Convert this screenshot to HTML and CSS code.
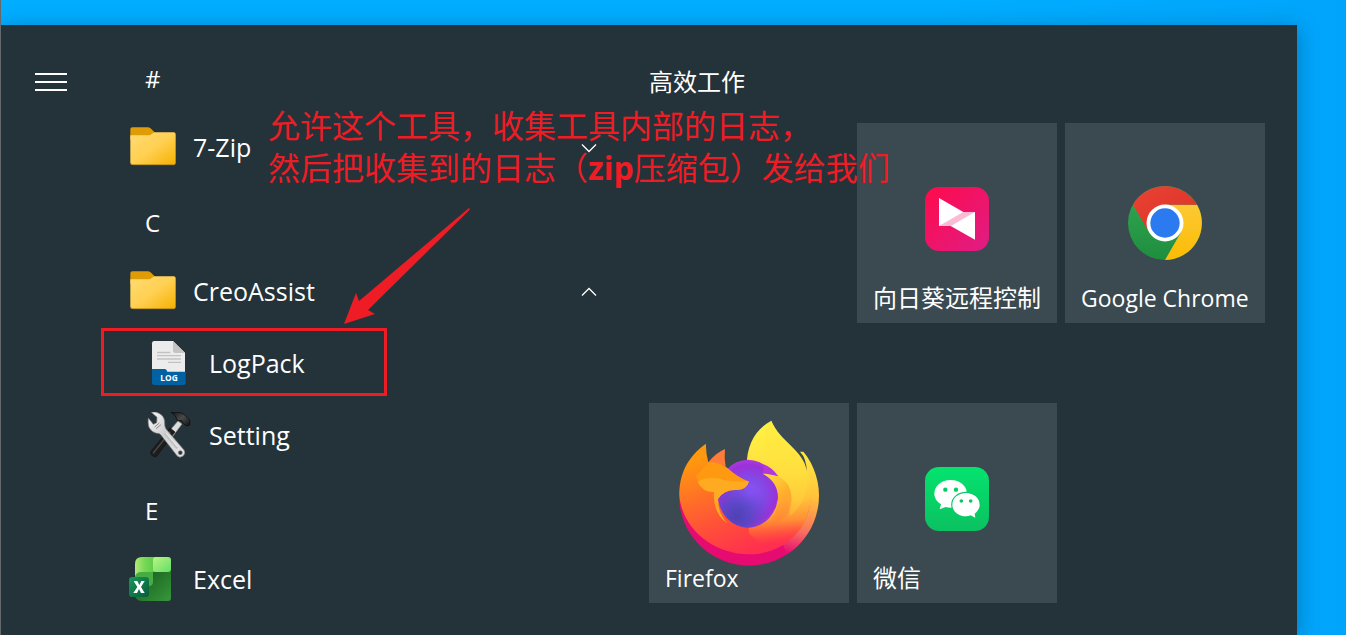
FILE: index.html
```html
<!DOCTYPE html>
<html lang="zh-CN">
<head>
<meta charset="utf-8">
<title>Start</title>
<link rel="stylesheet" href="styles.css">
</head>
<body>
<svg class="defs" aria-hidden="true">
  <defs>
    <linearGradient id="folderFace" x1="0" y1="0" x2="1" y2="1"><stop offset="0" stop-color="#ffdc73"/><stop offset=".5" stop-color="#ffd052"/><stop offset="1" stop-color="#f5b100"/></linearGradient>
    <symbol id="folder" viewBox="27 204 144 144">
      <path d="M31 240V220q0-6 6-6h47q6 0 10 5l12 12v20H31z" fill="#df9c07"/>
      <path d="M31 238H86q5 0 9-4l4-3q3-2 7-2h55q6 0 6 6v85q0 6-6 6H37q-6 0-6-6z" fill="url(#folderFace)"/>
      <path d="M33 322q2 4 6 4h121q4 0 6-4" fill="none" stroke="#c99218" stroke-width="2"/>
    </symbol>
  </defs>
</svg>
<div class="desktop">
  <main class="menu">
    <nav class="rail">
      <button class="hamburger" aria-label="展开"><span></span><span></span><span></span></button>
    </nav>

    <section class="apps">
      <button class="row letter">#</button>
      <button class="row">
        <svg class="icon"><use href="#folder"/></svg>
        <span class="name">7-Zip</span>
        <svg class="chevron" viewBox="0 0 16 16"><path d="M1 4.500l7 7 7-7"/></svg>
      </button>
      <button class="row letter">C</button>
      <button class="row">
        <svg class="icon"><use href="#folder"/></svg>
        <span class="name">CreoAssist</span>
        <svg class="chevron" viewBox="0 0 16 16"><path d="M1 11.500l7-7 7 7"/></svg>
      </button>
      <button class="row sub marked">
        <svg class="icon" viewBox="75 420 144 144">
          <path d="M96 510V430q0-7 7-7h56l36 35v60H96z" fill="#ececec"/>
          <path d="M159 423l36 36h-30q-6 0-6-6z" fill="#c4c4c4"/>
          <path d="M111 457.500h40M111 467h72M111 477h72M144 487h39" stroke="#c2c2c2" stroke-width="4"/>
          <path d="M96 507h39q5 0 7 8h55v33q0 7-7 7H103q-7 0-7-7z" fill="#0062a3"/>
          <text x="147" y="543" text-anchor="middle" class="log-text">LOG</text>
        </svg>
        <span class="name">LogPack</span>
      </button>
      <button class="row sub">
        <svg class="icon" viewBox="75 66 144 144">
          <defs>
            <linearGradient id="steel" x1="0" y1="0" x2="1" y2="1"><stop offset="0" stop-color="#fafafa"/><stop offset=".45" stop-color="#cfcfcf"/><stop offset="1" stop-color="#e8e8e8"/></linearGradient>
            <linearGradient id="hammer" x1="0" y1="0" x2="1" y2="1"><stop offset="0" stop-color="#111"/><stop offset=".5" stop-color="#4a4a4a"/><stop offset="1" stop-color="#111"/></linearGradient>
          </defs>
          <path d="M174 93l12 9-36 48-15-12z" fill="#ddd" stroke="#888" stroke-width="2"/>
          <path d="M150 114l15 12-55 73q-5 4-12-1t-6-13z" fill="#1d1d1d" stroke="#111" stroke-width="2"/>
          <path d="M150 126l-50 63" stroke="#484848" stroke-width="4" stroke-linecap="round"/>
          <path d="M153 67q24-4 38 6l10 9 8 8v15l-11 3-8-8-6-9-11 1q-5-17-20-25z" fill="url(#hammer)" stroke="#080808" stroke-width="2"/>
          <path d="M94 67q12-3 21 2 17 7 19 26-1 14 4 22l54 63q6 10-2 17-10 9-19 0l-49-63q-5-5-12-4-15-3-23-18-4-12-2-28l15 19 10-5 1-16z" fill="url(#steel)" stroke="#777" stroke-width="2"/>
          <path d="M104 111l14-12m-10 17l15-12" stroke="#666" stroke-width="2"/>
          <path d="M136 132l34 41" stroke="#c2c2c2" stroke-width="7" stroke-linecap="round"/>
          <path d="M138 129l34 41" stroke="#fff" stroke-width="2"/>
          <circle cx="181" cy="188" r="6" fill="#25343b" stroke="#777" stroke-width="2"/>
        </svg>
        <span class="name">Setting</span>
      </button>
      <button class="row letter">E</button>
      <button class="row">
        <svg class="icon" viewBox="27 498 144 144">
          <defs>
            <linearGradient id="xlA" x1="0" x2="1"><stop offset="0" stop-color="#b5e878"/><stop offset=".4" stop-color="#78d958"/><stop offset="1" stop-color="#55c642"/></linearGradient>
            <linearGradient id="xlB" x1="0" y1="0" x2="1" y2="1"><stop offset="0" stop-color="#bdf287"/><stop offset="1" stop-color="#62e063"/></linearGradient>
            <linearGradient id="xlC" x1="0" y1="0" x2="1" y2="1"><stop offset="0" stop-color="#17561c"/><stop offset="1" stop-color="#36983a"/></linearGradient>
            <linearGradient id="xlD" x1="0" y1="0" x2="1" y2="1"><stop offset="0" stop-color="#18965a"/><stop offset="1" stop-color="#075c3b"/></linearGradient>
          </defs>
          <path d="M45 540h108v84q0 9-9 9H66q-21 0-21-21z" fill="url(#xlC)"/>
          <path d="M45 600v-34q0-20 20-20h34v30q0 12-12 12z" fill="#46ad43"/>
          <path d="M45 566V522q0-21 21-21h48v45H65q-20 0-20 20z" fill="url(#xlA)"/>
          <rect x="99" y="501" width="54" height="45" rx="9" fill="url(#xlB)"/>
          <rect x="27" y="561" width="60" height="60" rx="10" fill="url(#xlD)"/>
          <path d="M41 573h11l6 12 6-12h10l-11 18 11 18H63l-6-12-6 12H40l12-18z" fill="#fff"/>
        </svg>
        <span class="name">Excel</span>
      </button>
    </section>

    <section class="pinned">
      <h2>高效工作</h2>
      <div class="tiles">
        <button class="tile second">
          <svg class="art" viewBox="6 9 600 600">
            <defs><linearGradient id="sun" x1="0" y1="0" x2="1" y2="1"><stop offset="0" stop-color="#ff0a4b"/><stop offset="1" stop-color="#df1d85"/></linearGradient></defs>
            <rect x="210" y="201" width="192" height="192" rx="42" fill="url(#sun)"/>
            <path d="M252 234l73 42h35v83l-73-41h-35z" fill="#fff"/>
            <path d="M325 276h35l-73 42h-35z" fill="#fbbbd3"/>
          </svg>
          <span class="label cjk">向日葵远程控制</span>
        </button>
        <button class="tile">
          <svg class="art" viewBox="15 9 600 600">
            <defs>
              <linearGradient id="chR" x1="0" y1="0" x2="1" y2="1"><stop offset="0" stop-color="#ea4335"/><stop offset="1" stop-color="#d93025"/></linearGradient>
              <linearGradient id="chY" x1="0" y1="0" x2="0" y2="1"><stop offset="0" stop-color="#fcc934"/><stop offset="1" stop-color="#fbbc04"/></linearGradient>
              <linearGradient id="chG" x1="0" y1="0" x2="0" y2="1"><stop offset="0" stop-color="#34a853"/><stop offset="1" stop-color="#1e8e3e"/></linearGradient>
            </defs>
            <circle cx="315" cy="309" r="111" fill="url(#chG)"/>
            <path d="M315 254H411A111 111 0 0 1 315 420L363 336.500z" fill="url(#chY)"/>
            <path d="M219 254A111 111 0 0 1 411 254H315L267 336.500z" fill="url(#chR)"/>
            <circle cx="315" cy="309" r="55.500" fill="#fff"/>
            <circle cx="315" cy="309" r="44" fill="#2b7af0"/>
          </svg>
          <span class="label">Google Chrome</span>
        </button>
        <button class="tile first">
          <svg class="art" viewBox="12 9 600 600">
            <defs>
              <clipPath id="ffDisc"><circle cx="312" cy="287" r="210"/></clipPath>
              <linearGradient id="ffBody" gradientUnits="userSpaceOnUse" x1="180" y1="170" x2="290" y2="465"><stop offset="0" stop-color="#ff980e"/><stop offset=".4" stop-color="#ff6a2a"/><stop offset=".7" stop-color="#ff4b3c"/><stop offset="1" stop-color="#ff304f"/></linearGradient>
              <linearGradient id="ffTail" gradientUnits="userSpaceOnUse" x1="380" y1="90" x2="400" y2="430"><stop offset="0" stop-color="#fff044"/><stop offset=".4" stop-color="#ffdc3e"/><stop offset=".62" stop-color="#ffc23a"/><stop offset=".8" stop-color="#ff9035"/><stop offset="1" stop-color="#ff5a35" stop-opacity="0"/></linearGradient>
              <linearGradient id="ffEdge" gradientUnits="userSpaceOnUse" x1="500" y1="170" x2="425" y2="460"><stop offset="0" stop-color="#ffe843"/><stop offset=".4" stop-color="#ffc03a"/><stop offset=".75" stop-color="#fa7060"/><stop offset="1" stop-color="#e60b70"/></linearGradient>
              <linearGradient id="ffIn" x1="0" y1="0" x2=".5" y2="1"><stop offset="0" stop-color="#ffe040"/><stop offset=".55" stop-color="#ffb22c"/><stop offset="1" stop-color="#ff6a32" stop-opacity=".2"/></linearGradient>
              <radialGradient id="ffGlobe" gradientUnits="userSpaceOnUse" cx="312" cy="280" r="105"><stop offset="0" stop-color="#8f56ff"/><stop offset=".45" stop-color="#8249e6"/><stop offset=".8" stop-color="#9a32d8"/><stop offset="1" stop-color="#b338e0"/></radialGradient>
              <radialGradient id="ffDeep" gradientUnits="userSpaceOnUse" cx="275" cy="350" r="105"><stop offset="0" stop-color="#5040b4"/><stop offset=".35" stop-color="#5248c0" stop-opacity=".85"/><stop offset="1" stop-color="#6845cf" stop-opacity="0"/></radialGradient>
            </defs>
            <g clip-path="url(#ffDisc)">
              <path d="M100 280h340v220H100z" fill="#e60b70"/>
              <path d="M465 155q20 20 20 60L400 400l25 63 100 0V155z" fill="url(#ffEdge)"/>
            </g>
            <path d="M183 131C125 172 103 225 103 285C110 385 205 463 312 463C415 463 490 390 496 300Q500 250 483 210L400 280 240 200 190 187q-8-27-7-56z" fill="url(#ffBody)"/>
            <path d="M190 187q20-27 50-40-3 29 2 54l-26 2z" fill="#ff7b38"/>
            <path d="M306 220C300 145 325 92 379 62C405 125 475 150 485 210C505 255 500 300 490 335C475 395 430 440 370 455L312 400z" fill="url(#ffTail)"/>
            <path d="M358 110c-15 110 78 140 77 238 34-27 55-65 51-116-3-50-77-96-107-170q-16 13-21 48z" fill="#ffe13c" opacity=".28"/>
            <ellipse cx="309" cy="281" rx="91" ry="102" fill="url(#ffGlobe)"/>
            <ellipse cx="309" cy="281" rx="91" ry="102" fill="url(#ffDeep)"/>
            <path d="M353 221q46-5 75 31 27 54-8 100-25 26-65 31 37-25 43-74 8-60-45-88z" fill="url(#ffIn)"/>
            <path d="M354 219q27 5 46 10-18-26-44-36z" fill="#b336df"/>
            <path d="M190 187q31-4 61 20 26 24 61 38-8 25-35 25-39-2-59 27l-10-20q-31-9-47-29l-8-20z" fill="#ff9912"/>
            <path d="M158 246q23-16 59-11 45 14 95 9-6 24-34 25-42-1-59 28-1 41 28 73-45-32-40-94-35 1-49-30z" fill="#ffab22"/>
          </svg>
          <span class="label">Firefox</span>
        </button>
        <button class="tile">
          <svg class="art" viewBox="6 9 600 600">
            <defs><linearGradient id="wx" x1="0" y1="0" x2="0" y2="1"><stop offset="0" stop-color="#04e36e"/><stop offset="1" stop-color="#0bc161"/></linearGradient></defs>
            <rect x="210" y="201" width="192" height="192" rx="42" fill="url(#wx)"/>
            <path d="M287 240c28 0 49 18 49 41 0 24-21 42-49 42q-8 0-15-2l-18 7 4-15c-12-8-20-19-20-32 0-23 21-41 49-41z" fill="#fff"/>
            <circle cx="271" cy="269" r="6.500" fill="#08ca64"/><circle cx="303" cy="269" r="6.500" fill="#08ca64"/>
            <path d="M333 279c23 0 41 15 41 35 0 11-6 20-15 27l2 12-14-7q-7 3-14 3c-23 0-41-15-41-35s18-35 41-35z" fill="#fff" stroke="#08cc65" stroke-width="7" paint-order="stroke"/>
            <circle cx="319" cy="303" r="5.500" fill="#08c863"/><circle cx="347" cy="303" r="5.500" fill="#08c863"/>
          </svg>
          <span class="label cjk">微信</span>
        </button>
      </div>
    </section>

    <p class="note">允许这个工具，收集工具内部的日志，<br>然后把收集到的日志（<b>zip</b>压缩包）发给我们</p>
    <svg class="arrow" viewBox="344 208 126 116"><path d="M469 208l1 1.500L368 310l7 4-31 10 12-31 3 8z" fill="#ee1c24"/></svg>
  </main>
</div>
</body>
</html>
```
FILE: styles.css
```css
*, *::after { box-sizing: border-box; }

body {
  margin: 0;
  font-family: "Open Sans", "Noto Sans CJK SC", sans-serif;
  color: #fff;
}

button {
  margin: 0;
  padding: 0;
  border: 0;
  background: none;
  color: inherit;
  font: inherit;
  text-align: left;
}

.defs { position: absolute; width: 0; height: 0; }

.desktop {
  min-height: 100vh;
  padding: 25px 49px 0 0;
  border-left: 1px solid #66696b;
  background: linear-gradient(90deg, #00adff 70%, #00a5fb);
  display: flex;
  overflow: hidden;
}

.menu {
  position: relative;
  flex: 1;
  display: flex;
  background: #24333a;
  box-shadow: 0 4px 20px rgba(0, 30, 60, 0.35);
}

.rail { width: 100px; padding: 48px 34px; }

.hamburger {
  width: 32px;
  display: flex;
  flex-direction: column;
  gap: 6px;
}

.hamburger span { height: 2px; width: 100%; background: #fff; }

.apps {
  flex: 1;
  padding-top: 15px;
  display: flex;
  flex-direction: column;
}

.row {
  position: relative;
  height: 72px;
  padding: 0 21px 0 28px;
  display: flex;
  align-items: center;
  gap: 16px;
  font-size: 25px;
  line-height: 32px;
}

.sub { padding-left: 44px; }

.letter { padding: 6px 0 0 44px; font-size: 24px; }

.icon { width: 48px; height: 48px; flex: none; }

.name { flex: 1; padding-bottom: 2px; }

.chevron {
  width: 16px;
  height: 16px;
  fill: none;
  stroke: #fff;
  stroke-width: 1.3;
}

.log-text { font: bold 25px "Open Sans", sans-serif; fill: #fff; }

.marked::after {
  content: "";
  position: absolute;
  left: 0;
  top: 0;
  width: 286px;
  height: 68px;
  border: 3px solid #ee1c24;
}

.pinned { padding: 40px 32px 32px 31px; }

.pinned h2 {
  margin: 0 0 24px;
  font-size: 24px;
  line-height: 34px;
  font-weight: 400;
}

.tiles {
  display: grid;
  grid-template-columns: repeat(3, 200px);
  column-gap: 8px;
  row-gap: 80px;
}

.tile {
  height: 200px;
  display: grid;
  background: #3b4950;
}

.first { grid-column: 1; }
.second { grid-column: 2; }

.art, .label { grid-area: 1 / 1; }

.art { width: 200px; height: 200px; }

.label {
  align-self: end;
  padding: 0 16px 9px;
  font-size: 23px;
  line-height: 32px;
  white-space: nowrap;
}

.cjk { font-size: 24px; }

.note {
  position: absolute;
  left: 267px;
  top: 78px;
  margin: 0;
  color: #ee1c24;
  font-family: "Noto Sans CJK SC", sans-serif;
  font-size: 32px;
  line-height: 42px;
  white-space: nowrap;
}

.note b { font-family: "Open Sans", sans-serif; font-weight: 700; }

.arrow {
  position: absolute;
  left: 343px;
  top: 183px;
  width: 126px;
  height: 116px;
}
```
